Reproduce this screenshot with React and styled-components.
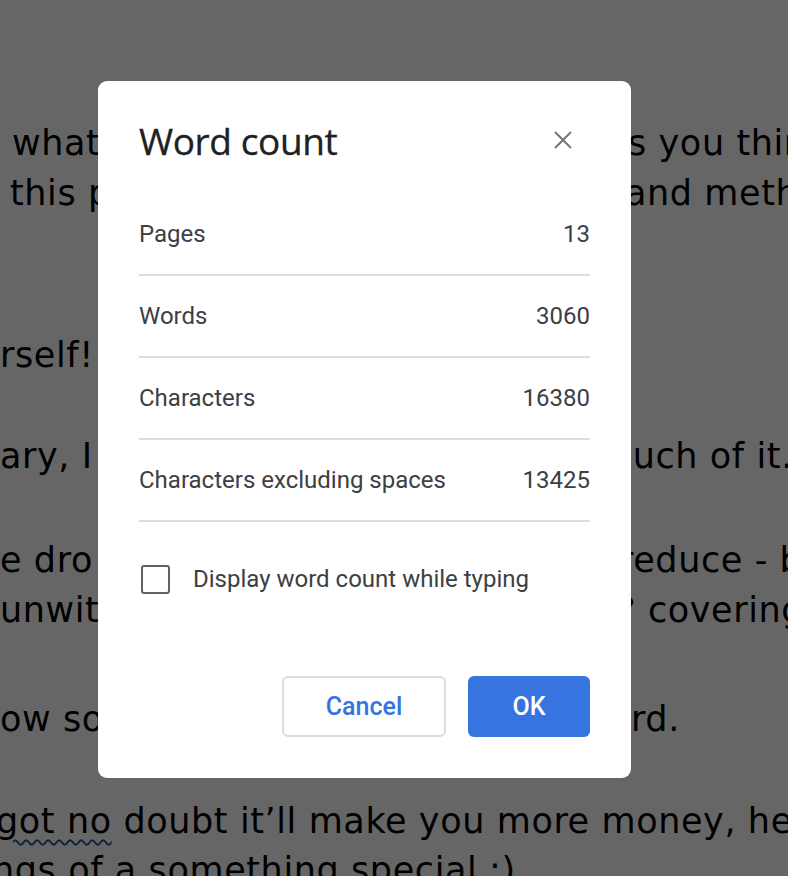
import React from "react";
import styled, { createGlobalStyle } from "styled-components";

const GlobalStyle = createGlobalStyle`
  html, body {
    margin: 0;
    padding: 0;
    background: #ffffff;
  }
  * {
    box-sizing: border-box;
  }
`;

const Page = styled.div`
  position: relative;
  width: 788px;
  height: 876px;
  overflow: hidden;
  background: #ffffff;
`;

const Document = styled.div`
  display: flex;
  flex-direction: column;
  padding-top: 118px;
  font-family: Verdana, "DejaVu Sans", sans-serif;
  font-size: 35px;
  letter-spacing: 0.6px;
  line-height: 50px;
  color: #000000;
`;

const DocLine = styled.div`
  display: grid;
  grid-template-columns: 98px 533px 157px;
  margin-top: ${(p) => p.$space || 0}px;
  white-space: nowrap;
`;

const LeftText = styled.span`
  overflow: hidden;
  padding-left: ${(p) => Math.max(p.$lead || 0, 0)}px;
  text-indent: ${(p) => Math.min(p.$lead || 0, 0)}px;
`;

const RightText = styled.span`
  grid-column: 3;
  overflow: hidden;
  text-indent: ${(p) => p.$lead || 0}px;
`;

const FullLine = styled.div`
  margin-top: ${(p) => p.$space || 0}px;
  white-space: nowrap;
  overflow: hidden;
  text-indent: ${(p) => p.$lead || 0}px;
`;

const Misspelled = styled.span`
  text-decoration: underline wavy #2f4d9a;
  text-decoration-thickness: 2px;
  text-underline-offset: 6px;
`;

const Overlay = styled.div`
  position: absolute;
  inset: 0;
  background: rgba(0, 0, 0, 0.6);
  padding: 81px 0 0 98px;
`;

const Dialog = styled.div`
  width: 533px;
  height: 697px;
  background: #ffffff;
  border-radius: 9px;
  padding: 0 41px 41px;
  display: flex;
  flex-direction: column;
  font-family: Roboto, "Liberation Sans", Arial, sans-serif;
`;

const Header = styled.div`
  display: flex;
  align-items: center;
  justify-content: space-between;
  height: 113px;
  padding-top: 6px;
`;

const Title = styled.h1`
  margin: 0;
  font-family: "Open Sans", Roboto, sans-serif;
  font-weight: 400;
  font-size: 37px;
  letter-spacing: -0.4px;
  color: #202124;
  -webkit-text-stroke: 0.3px #202124;
`;

const CloseButton = styled.button`
  border: none;
  background: none;
  padding: 0;
  margin-right: 17px;
  margin-bottom: 2px;
  width: 20px;
  height: 20px;
  display: flex;
  align-items: center;
  justify-content: center;
  cursor: pointer;
`;

const StatRow = styled.div`
  display: flex;
  align-items: center;
  justify-content: space-between;
  height: 82px;
  border-bottom: 2px solid #dadce0;
  font-size: 24px;
  color: #3c4043;
`;

const CheckRow = styled.label`
  display: flex;
  align-items: center;
  gap: 23px;
  margin-top: 29px;
  height: 56px;
  padding-left: 2px;
  font-size: 24px;
  color: #3c4043;
`;

const CheckBox = styled.span`
  width: 29px;
  height: 29px;
  border: 2.5px solid #5f6368;
  border-radius: 3px;
`;

const Footer = styled.div`
  margin-top: auto;
  display: flex;
  justify-content: flex-end;
  align-items: center;
  gap: 22px;
`;

const Button = styled.button`
  height: 61px;
  min-width: ${(p) => (p.$primary ? 122 : 164)}px;
  border-radius: 6px;
  border: ${(p) => (p.$primary ? "none" : "2px solid #dadce0")};
  background: ${(p) => (p.$primary ? "#3674df" : "#ffffff")};
  color: ${(p) => (p.$primary ? "#ffffff" : "#3674df")};
  font-family: Roboto, "Liberation Sans", Arial, sans-serif;
  font-weight: 500;
  font-size: 25px;
  cursor: pointer;
`;

const lines = [
  { left: "what", lead: 12, right: "s you think", rlead: -3, space: 0 },
  { left: "this p", lead: 10, right: "and meth", rlead: -6, space: 0 },
  { left: "rself!", lead: 0, space: 112 },
  { left: "ary, I", lead: 0, right: "much of it.", rlead: -33, space: 51 },
  { left: "e dro", lead: 0, right: "reduce - b", rlead: -12, space: 54 },
  { left: "unwitt", lead: 0, right: "? covering", rlead: -14, space: 0 },
  { left: "ow sor", lead: 0, right: "rd.", rlead: 0, space: 59 },
];

const stats = [
  ["Pages", "13"],
  ["Words", "3060"],
  ["Characters", "16380"],
  ["Characters excluding spaces", "13425"],
];

export default function App() {
  return (
    <>
      <GlobalStyle />
      <Page>
        <Document>
          {lines.map((line, i) => (
            <DocLine key={i} $space={line.space}>
              <LeftText $lead={line.lead}>{line.left}</LeftText>
              {line.right && (
                <RightText $lead={line.rlead}>{line.right}</RightText>
              )}
            </DocLine>
          ))}
          <FullLine $space={52} $lead={-4}>
            <Misspelled>got no</Misspelled> doubt it’ll make you more money, help
          </FullLine>
          <FullLine $space={-1} $lead={-8}>
            ngs of a something special :)
          </FullLine>
        </Document>
        <Overlay>
          <Dialog>
            <Header>
              <Title>Word count</Title>
              <CloseButton aria-label="Close">
                <svg width="18" height="18" viewBox="0 0 18 18">
                  <path
                    d="M1 1 L17 17 M17 1 L1 17"
                    stroke="#757575"
                    strokeWidth="2"
                    fill="none"
                  />
                </svg>
              </CloseButton>
            </Header>
            {stats.map(([label, value]) => (
              <StatRow key={label}>
                <span>{label}</span>
                <span>{value}</span>
              </StatRow>
            ))}
            <CheckRow>
              <CheckBox />
              Display word count while typing
            </CheckRow>
            <Footer>
              <Button>Cancel</Button>
              <Button $primary>OK</Button>
            </Footer>
          </Dialog>
        </Overlay>
      </Page>
    </>
  );
}
